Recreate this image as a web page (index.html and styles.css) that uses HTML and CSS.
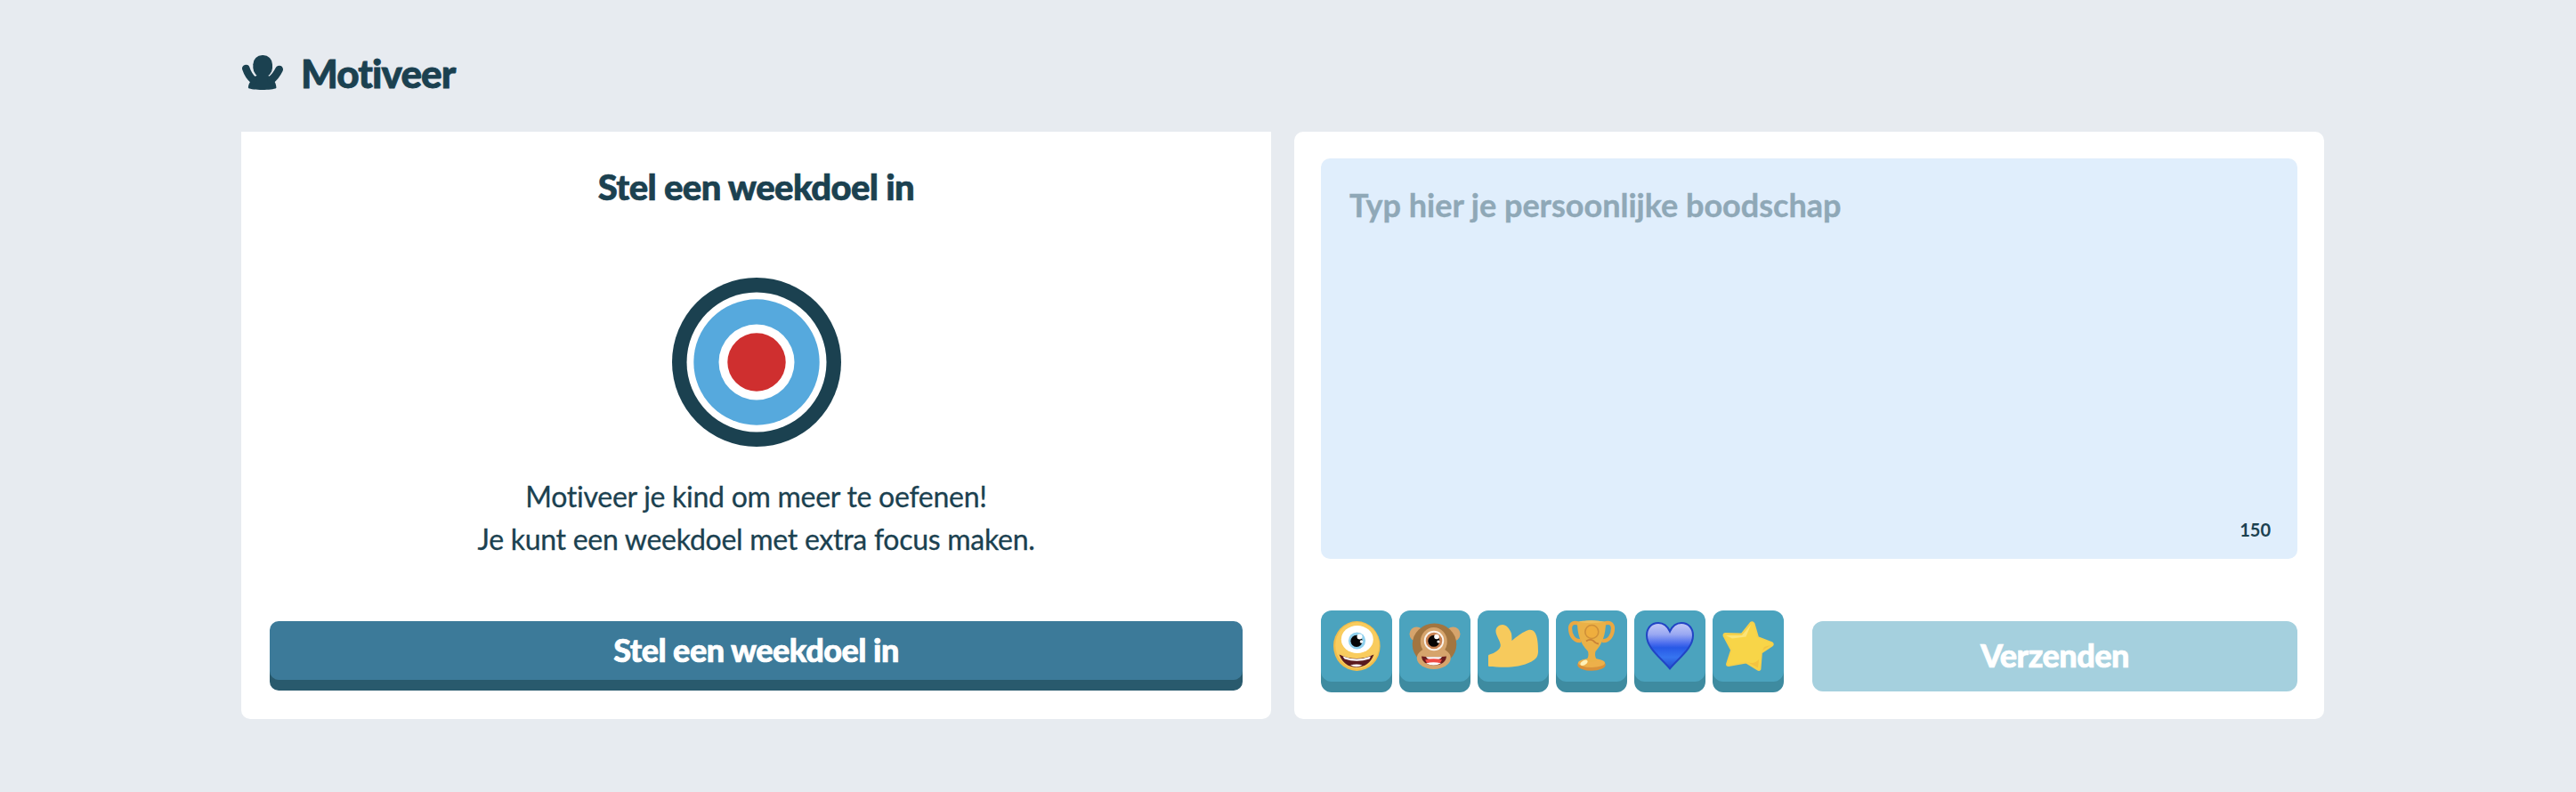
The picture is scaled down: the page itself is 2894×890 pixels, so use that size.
FILE: index.html
```html
<!DOCTYPE html>
<html lang="nl">
<head>
<meta charset="utf-8">
<title>Motiveer</title>
<link rel="stylesheet" href="styles.css">
</head>
<body>
<main class="page">
  <header class="page-header">
    <svg class="logo" viewBox="66 66 138 117" aria-hidden="true">
      <rect x="103" y="66" width="65" height="74" rx="31"/>
      <path d="M116 130 C116 142 104 134 102 144 C88 160 86 172 87 177 C100 185 168 185 181 177 C182 168 178 154 166 144 C164 134 153 142 153 130 Z"/>
      <path d="M79 111 C84 126 92 140 104 150 M191 114 C184 128 176 140 164 149" fill="none" stroke="currentColor" stroke-width="26" stroke-linecap="round"/>
    </svg>
    <h1 class="page-title">Motiveer</h1>
  </header>
  <div class="cards">
    <section class="card goal">
      <h2 class="goal-title">Stel een weekdoel in</h2>
      <svg class="target" viewBox="0 0 190 190" aria-hidden="true">
        <circle cx="95" cy="95" r="95" fill="#1b4150"/>
        <circle cx="95" cy="95" r="78.5" fill="#fff"/>
        <circle cx="95" cy="95" r="70.7" fill="#56a9dd"/>
        <circle cx="95" cy="95" r="42.5" fill="#fff"/>
        <circle cx="95" cy="95" r="32.7" fill="#cf2f2f"/>
      </svg>
      <p class="goal-text">Motiveer je kind om meer te oefenen!<br>Je kunt een weekdoel met extra focus maken.</p>
      <button class="goal-button">Stel een weekdoel in</button>
    </section>
    <section class="card message">
      <div class="message-box">
        <span class="placeholder">Typ hier je persoonlijke boodschap</span>
        <span class="counter">150</span>
      </div>
      <div class="actions">
        <div class="emojis">
          <button class="emoji" aria-label="Monster"><svg viewBox="0 0 80 80">
            <ellipse cx="40.3" cy="40" rx="26.3" ry="28" fill="#f1bd4b"/>
            <ellipse cx="40.8" cy="39.2" rx="24.6" ry="26" fill="#f9cc5e"/>
            <ellipse cx="40.8" cy="32.5" rx="18" ry="15.5" fill="#fff"/>
            <circle cx="40.5" cy="34" r="9.6" fill="#8fd0ee"/>
            <circle cx="40" cy="34.3" r="6.6" fill="#050608"/>
            <circle cx="43.5" cy="29.5" r="3" fill="#fff"/><circle cx="45.5" cy="35" r="1.8" fill="#fff"/>
            <path d="M20.5 49.5Q40 58.500 59.500 49.5Q54 63.800 39.500 63.800Q26 63.500 20.500 49.500Z" fill="#5a1a1f"/>
            <path d="M24.500 51.500Q40 57.500 56 51.500L54.500 54.500Q40 59 26.500 54.500Z" fill="#fff"/>
            <path d="M33 61.500Q40 59.500 46.500 61.500Q40 64.800 33 61.500Z" fill="#fff"/>
          </svg></button>
          <button class="emoji" aria-label="Aap"><svg viewBox="0 0 80 80">
            <circle cx="19.500" cy="26.500" r="8" fill="#d6a46c"/><circle cx="60.500" cy="26.500" r="8" fill="#d6a46c"/>
            <ellipse cx="39.500" cy="38" rx="24.800" ry="23.500" fill="#a27540"/>
            <ellipse cx="38.800" cy="35" rx="15" ry="16" fill="#d6a46c"/>
            <ellipse cx="38.800" cy="53.500" rx="19" ry="12.500" fill="#d6a46c"/>
            <circle cx="39" cy="34" r="11.200" fill="#fbf4ec"/>
            <circle cx="39" cy="34" r="9.300" fill="#c98252"/>
            <circle cx="38.800" cy="34.300" r="6.500" fill="#080606"/>
            <circle cx="42" cy="29.500" r="2.800" fill="#fff"/><circle cx="44" cy="35" r="1.600" fill="#fff"/>
            <path d="M25 51.500Q39 53.500 53 51.500Q52 61.500 38.500 61.500Q26 61 25 51.500Z" fill="#6b1d1d"/>
            <path d="M30 52.300H48Q46 55.500 38.500 55.500Q32 55.500 30 52.300Z" fill="#fff"/>
            <path d="M29 55.500Q38.500 52.800 48 55.500L46 59H31Z" fill="#ef4b45"/>
            <path d="M30 59.500Q38.500 57 47 59.500Q38.500 63.500 30 59.500Z" fill="#fff"/>
          </svg></button>
          <button class="emoji" aria-label="Duim omhoog"><svg viewBox="0 0 80 80">
            <path d="M20.500 24C20 19 24 16 28 16C32 16 36 20 38 26C38.500 30 38.500 31 38.500 34C44 29 50 25 53.500 23.500C58 21 62 21 64.500 25C67.500 30 68 38 68 46C68 50 67 53 63.500 55.500C56 61 44 63.500 34 63.700C26 64 18 63 13.500 63C12.500 63 12 62.500 12 61.500V51C12 50 12.500 50 13.500 49.500C19 48 26 44 25.800 39C25 33 21 29 20.500 24Z" fill="#f7ca5c"/>
          </svg></button>
          <button class="emoji" aria-label="Beker"><svg viewBox="0 0 80 80">
            <path d="M26 15C20 12 16 15 16 20C16 27 20 35 28 34M54 15C60 12 64 15 64 20C64 27 60 35 52 34" fill="none" stroke="#eaa843" stroke-width="4.200"/>
            <ellipse cx="40" cy="61" rx="15.800" ry="6.700" fill="#d9913a"/>
            <ellipse cx="40" cy="59" rx="15" ry="5" fill="#edb04a"/>
            <path d="M24 13Q40 9.500 56 13C56 27 52 38 44.500 46C43.500 50 44 53 47 56.500Q40 59 33.500 56.500C36.500 53 37 50 36 46C28 38 24 27 24 13Z" fill="#eab147"/>
            <path d="M25 12.800Q40 9.500 55 12.800Q40 15.500 25 12.800Z" fill="#efbf5c"/>
            <circle cx="40.300" cy="24" r="7.500" fill="#efae3e" stroke="#cf9039" stroke-width="1.600"/>
            <path d="M34 34.500Q38 31.500 42 34Q45 37.500 48 37.500" fill="none" stroke="#c98237" stroke-width="1.800"/>
            <ellipse cx="31.500" cy="58.800" rx="4.500" ry="2.500" fill="#fff1b8" transform="rotate(-30 31.500 58.800)"/>
          </svg></button>
          <button class="emoji" aria-label="Blauw hart"><svg viewBox="0 0 80 80">
            <defs><linearGradient id="heart" x1="0" y1="0" x2="0" y2="1">
              <stop offset="0" stop-color="#c3c9f7"/><stop offset=".25" stop-color="#99a8f2"/><stop offset=".45" stop-color="#4a6ced"/><stop offset=".54" stop-color="#2859e6"/><stop offset=".75" stop-color="#3674f0"/><stop offset="1" stop-color="#214ccc"/>
            </linearGradient></defs>
            <path d="M40 23.500C37 17 32.500 14 27 14C19 14 14 20 14 28C14 43 31 54 40 65.500C49 54 66 43 66 28C66 20 61 14 53 14C47.500 14 43 17 40 23.500Z" fill="url(#heart)" stroke="#2144c5" stroke-width="2"/>
          </svg></button>
          <button class="emoji" aria-label="Ster"><svg viewBox="0 0 80 80">
            <path d="M42.500 14Q44.500 12 46.500 14.500L51 30L66.500 36Q69 38 67 39.500L55 47.500L53.500 66Q52.500 68 50.500 66.500L37.500 58.500L18 62Q15.500 62 16 60L21 44.500L12.500 28.500Q12 26 14.500 26L32.500 26.500Z" fill="#f8d548" stroke="#f5d04b" stroke-width="1.800" stroke-linejoin="round"/>
            <path d="M15 28L33 28L43 16L37.500 29.500L22 31.500Z" fill="#fbe478"/>
            <path d="M39 58L51 64.500L52 55Q47 61 39 58ZM56 45L65 39L58 41Z" fill="#f4c341"/>
          </svg></button>
        </div>
        <button class="send">Verzenden</button>
      </div>
    </section>
  </div>
</main>
</body>
</html>
```
FILE: styles.css
```css
* { box-sizing: border-box; }
body {
  margin: 0;
  background: #e7ebf0;
  color: #1b4150;
  font-family: Lato, "Liberation Sans", sans-serif;
  font-variant-ligatures: none;
}
h1, h2, p { margin: 0; }
button { border: 0; padding: 0; font: inherit; color: #fff; }
.page { width: 2340px; margin: 0 auto 0 271px; padding-top: 50px; }
.page-header { display: flex; align-items: center; height: 64px; padding-left: 1px; }
.logo { width: 46px; height: 39px; margin-top: -1px; fill: currentColor; }
.page-title {
  margin-left: 20px; font-size: 44px; line-height: 64px; font-weight: 900;
  letter-spacing: -0.9px; -webkit-text-stroke: 0.8px currentColor;
}
.cards { display: grid; grid-template-columns: 1157px 1157px; gap: 26px; margin-top: 34px; height: 660px; }
.card { display: flex; flex-direction: column; background: #fff; border-radius: 10px; }
.goal { align-items: center; border-radius: 0 0 10px 10px; padding: 37px 32px 32px; }
.goal-title {
  font-size: 40px; line-height: 50px; font-weight: 900;
  letter-spacing: -0.6px; -webkit-text-stroke: 0.7px currentColor;
}
.target { width: 190px; height: 190px; margin-top: 77px; }
.goal-text {
  margin-top: 32px; font-size: 32px; line-height: 48px; letter-spacing: -0.27px;
  text-align: center; white-space: nowrap; -webkit-text-stroke: 0.3px currentColor;
}
.goal-button {
  width: 1093px; height: 66px; margin: auto 0 12px; padding-bottom: 2px;
  border-radius: 10px; background: #3c7a99; box-shadow: 0 12px 0 #295a6d;
  font-size: 36px; line-height: 64px; font-weight: 900;
  letter-spacing: -0.5px; -webkit-text-stroke: 0.7px currentColor;
}
.message { padding: 30px; }
.message-box {
  display: flex; flex-direction: column; justify-content: space-between;
  height: 450px; padding: 29px 30px 19px 32px; border-radius: 10px; background: #e0eefc;
}
.placeholder { font-size: 36px; line-height: 46px; font-weight: 700; color: #8fa8b7; -webkit-text-stroke: 0.4px currentColor; }
.counter { align-self: flex-end; font-size: 20px; line-height: 28px; font-weight: 700; }
.actions { display: flex; justify-content: space-between; margin-top: 58px; }
.emojis { display: flex; gap: 8px; }
.emoji { width: 80px; height: 80px; border-radius: 12px; background: #4ba3be; box-shadow: 0 12px 0 #3e8ba0; }
.emoji svg { display: block; width: 80px; height: 80px; }
.send {
  width: 545px; height: 79px; margin-top: 12px; padding-bottom: 2px; border-radius: 12px;
  background: #a5d0de; font-size: 36px; line-height: 77px; font-weight: 900;
  letter-spacing: -0.5px; -webkit-text-stroke: 0.7px currentColor;
}
```
